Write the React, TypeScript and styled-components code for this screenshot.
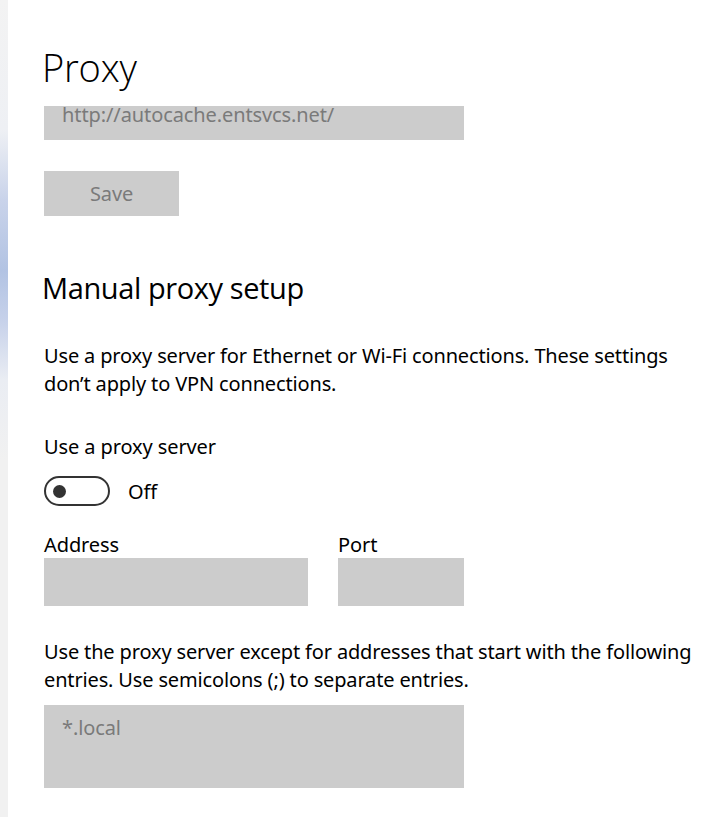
import React from "react";
import styled, { createGlobalStyle } from "styled-components";

const Global = createGlobalStyle`
  html, body { margin: 0; padding: 0; background: #ffffff; }
  body { font-family: "Noto Sans", "Open Sans", sans-serif; color: #000; }
  * { box-sizing: border-box; }
`;

const Shell = styled.div`
  display: flex;
  width: 722px;
  height: 817px;
  overflow: hidden;
  background: #fff;
`;

const Strip = styled.div`
  width: 8px;
  flex: 0 0 8px;
  background: linear-gradient(
    to bottom,
    #f3f3f3 0px,
    #eef0f4 130px,
    #c9d3ea 200px,
    #b2c3e3 270px,
    #c6d1ea 320px,
    #eaedf3 380px,
    #f1f1f1 460px,
    #f1f1f1 817px
  );
`;

const Main = styled.div`
  flex: 1;
  display: flex;
  flex-direction: column;
  padding-left: 34px;
  min-width: 0;
`;

const Header = styled.header`
  height: 106px;
  flex: 0 0 106px;
  padding-top: 39px;
`;

const Title = styled.h1`
  margin: 0;
  font-family: "Open Sans", sans-serif;
  font-weight: 300;
  font-size: 38px;
  line-height: 56px;
  letter-spacing: -0.2px;
`;

const Scroll = styled.div`
  flex: 1;
  overflow: hidden;
`;

const Content = styled.div`
  margin-top: -14px;
  padding-left: 2px;
  display: flex;
  flex-direction: column;
  width: 668px;
`;

const Field = styled.div<{ $w: number; $h?: number; $mt?: number }>`
  width: ${(p) => p.$w}px;
  height: ${(p) => p.$h ?? 48}px;
  margin-top: ${(p) => p.$mt ?? 0}px;
  background: #cccccc;
  color: #7a7a7a;
  font-size: 20px;
  padding: 9px 18px 0 18px;
  line-height: 28px;
  letter-spacing: -0.1px;
  white-space: nowrap;
`;

const SaveButton = styled.div`
  margin-top: 31px;
  width: 135px;
  height: 45px;
  background: #cccccc;
  color: #7a7a7a;
  font-size: 20px;
  letter-spacing: -0.1px;
  display: flex;
  align-items: center;
  justify-content: center;
`;

const Subtitle = styled.h2`
  margin: 52px 0 0 -2px;
  font-family: "Open Sans", sans-serif;
  font-weight: 400;
  font-size: 29px;
  line-height: 40px;
  letter-spacing: -0.4px;
`;

const Para = styled.p<{ $mt: number }>`
  margin: ${(p) => p.$mt}px 0 0 0;
  font-size: 20px;
  line-height: 28px;
  letter-spacing: -0.15px;
`;

const Label = styled.div<{ $mt: number }>`
  margin-top: ${(p) => p.$mt}px;
  font-size: 20px;
  line-height: 28px;
  letter-spacing: -0.1px;
`;

const ToggleRow = styled.div`
  display: flex;
  align-items: center;
  gap: 18px;
  margin-top: 15px;
`;

const Toggle = styled.div`
  width: 66px;
  height: 30px;
  border: 2px solid #333;
  border-radius: 15px;
  display: flex;
  align-items: center;
  padding-left: 7px;
`;

const Knob = styled.div`
  width: 13px;
  height: 13px;
  border-radius: 50%;
  background: #333;
`;

const ToggleText = styled.span`
  font-size: 20px;
  letter-spacing: -0.1px;
`;

const FieldRow = styled.div`
  display: flex;
  gap: 30px;
  margin-top: 26px;
`;

const FieldGroup = styled.div`
  display: flex;
  flex-direction: column;
`;

const FieldLabel = styled.div`
  font-size: 20px;
  line-height: 26px;
  letter-spacing: -0.1px;
`;

export default function App() {
  return (
    <>
      <Global />
      <Shell>
        <Strip />
        <Main>
          <Header>
            <Title>Proxy</Title>
          </Header>
          <Scroll>
            <Content>
              <Field $w={420}>http://autocache.entsvcs.net/</Field>
              <SaveButton>Save</SaveButton>
              <Subtitle>Manual proxy setup</Subtitle>
              <Para $mt={34}>
                Use a proxy server for Ethernet or Wi-Fi connections. These settings
                don’t apply to VPN connections.
              </Para>
              <Label $mt={35}>Use a proxy server</Label>
              <ToggleRow>
                <Toggle>
                  <Knob />
                </Toggle>
                <ToggleText>Off</ToggleText>
              </ToggleRow>
              <FieldRow>
                <FieldGroup>
                  <FieldLabel>Address</FieldLabel>
                  <Field $w={264} />
                </FieldGroup>
                <FieldGroup>
                  <FieldLabel>Port</FieldLabel>
                  <Field $w={126} />
                </FieldGroup>
              </FieldRow>
              <Para $mt={32}>
                Use the proxy server except for addresses that start with the following
                entries. Use semicolons (;) to separate entries.
              </Para>
              <Field $w={420} $h={83} $mt={11}>*.local</Field>
            </Content>
          </Scroll>
        </Main>
      </Shell>
    </>
  );
}
